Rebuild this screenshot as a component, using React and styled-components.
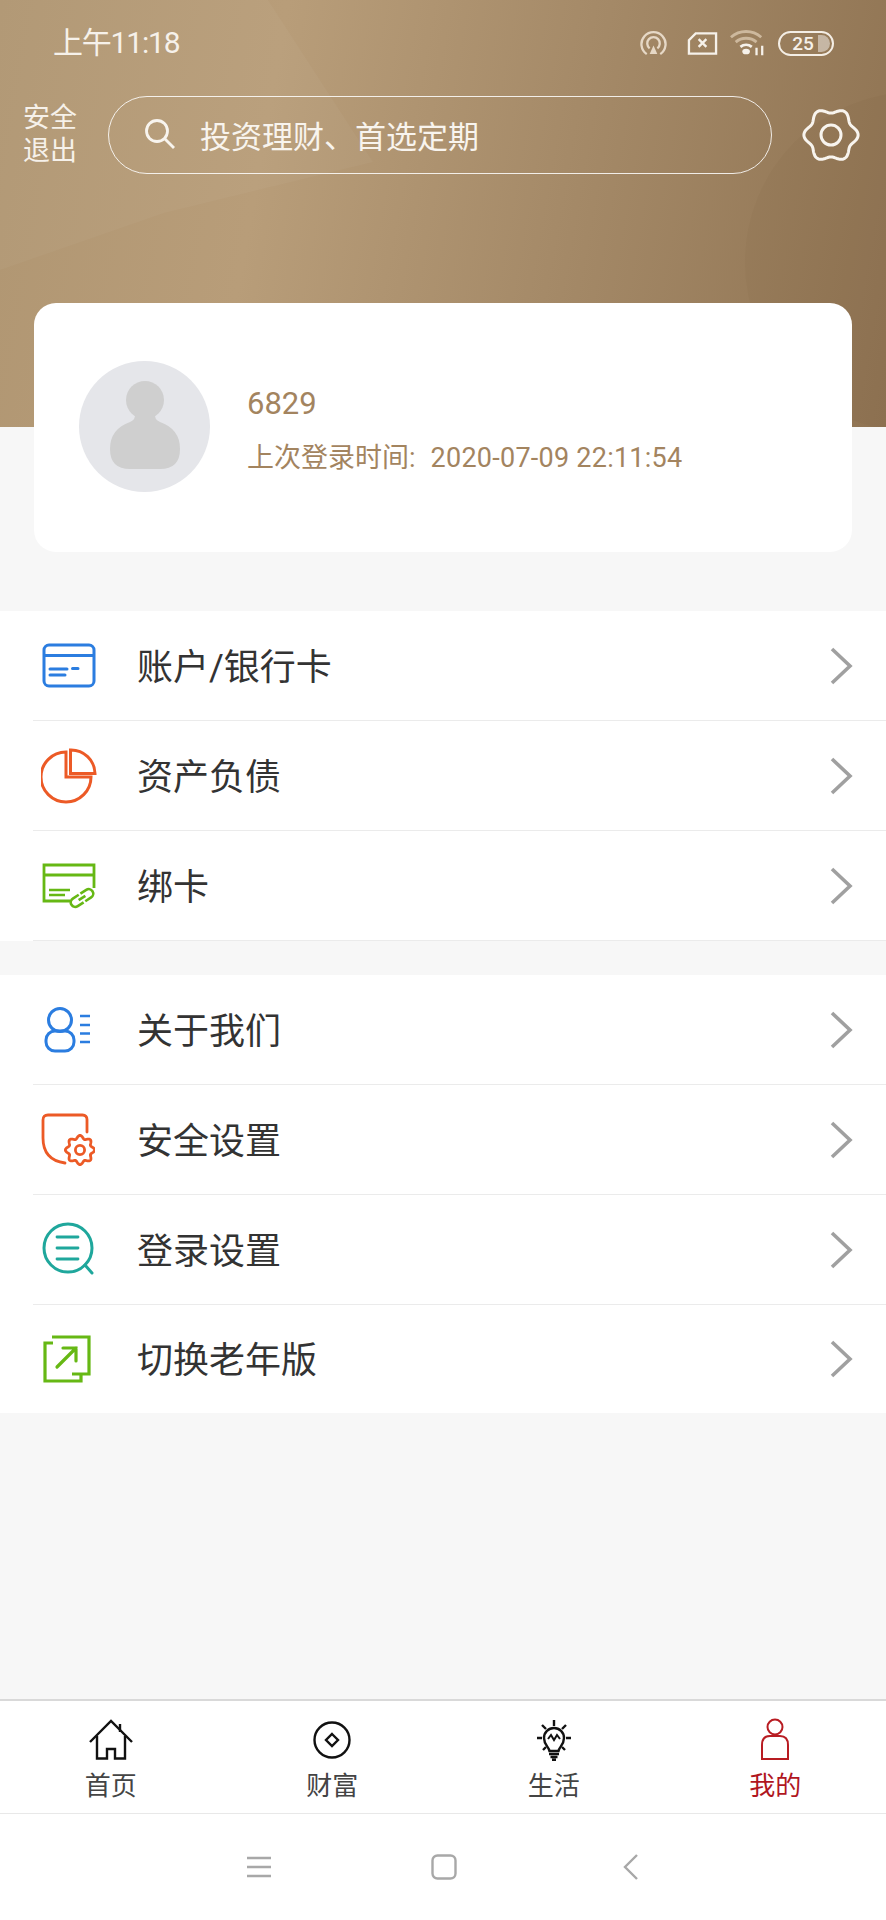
import React from "react";
import styled, { createGlobalStyle } from "styled-components";

const GlobalStyle = createGlobalStyle`
  html, body {
    margin: 0;
    padding: 0;
    height: 1920px;
    overflow: hidden;
    background: #f7f7f7;
  }
  * {
    box-sizing: border-box;
  }
`;

const FONT = `Roboto, "Noto Sans CJK SC", sans-serif`;

// wavy gear outline, used by the settings icons
const gearPath = (cx, cy, r, amp, lobes) => {
  const pts = [];
  for (let i = 0; i < 180; i++) {
    const t = (i / 180) * Math.PI * 2;
    const rr = r + amp * Math.cos(lobes * t);
    pts.push(`${(cx + rr * Math.cos(t)).toFixed(2)} ${(cy + rr * Math.sin(t)).toFixed(2)}`);
  }
  return `M${pts.join("L")}Z`;
};

function CardIcon() {
  return (
    <svg width="54" height="46" viewBox="0 0 54 46" fill="none" stroke="#2b7de0" strokeWidth="3">
      <rect x="2" y="2" width="50" height="41" rx="5" />
      <path d="M2 12.5H52" />
      <path d="M8 26H25M30.5 25.5H36M8 32H23" strokeWidth="3" strokeLinecap="round" />
    </svg>
  );
}

function PieIcon() {
  return (
    <svg width="56" height="56" viewBox="0 0 56 56" fill="none" stroke="#ec5a26" strokeWidth="3">
      <path d="M25 4A25 25 0 1 0 50 29H25Z" />
      <path d="M29.5 2A24 24 0 0 1 54 25.5H29.5Z" />
    </svg>
  );
}

function BindIcon() {
  return (
    <svg width="54" height="46" viewBox="0 0 54 46" fill="none" stroke="#66b814" strokeWidth="2.8">
      <path d="M28 38H2V2H52V25" />
      <path d="M2 12H52" />
      <path d="M7 27H28M7 32H23" strokeWidth="2.6" />
      <g strokeWidth="2.6" transform="translate(40 35) rotate(-33)">
        <path d="M-1 -4.5H-8A4.5 4.5 0 0 0 -8 4.5H-1" />
        <path d="M1 -4.5H8A4.5 4.5 0 0 1 8 4.5H1" />
        <path d="M-4 0H4" />
      </g>
    </svg>
  );
}

function AboutIcon() {
  return (
    <svg width="48" height="48" viewBox="0 0 48 48" fill="none" stroke="#2b7de0" strokeWidth="3">
      <circle cx="16" cy="14" r="11.5" />
      <rect x="2" y="25" width="28" height="20" rx="9" />
      <path d="M36 10H46M36 19H46M36 27.5H46M36 36H46" strokeWidth="2.6" />
    </svg>
  );
}

function SafeIcon() {
  return (
    <svg width="54" height="54" viewBox="0 0 54 54" fill="none" stroke="#ec5a26" strokeWidth="2.8" strokeLinecap="round">
      <path d="M46 19V6.5Q46 2 41.5 2H7Q2 2 2 7V25Q2 47 24 50" />
      <path d={gearPath(39, 37, 13, 1.6, 8)} />
      <circle cx="39" cy="37" r="4.6" />
    </svg>
  );
}

function LoginIcon() {
  return (
    <svg width="54" height="56" viewBox="0 0 54 56" fill="none" stroke="#1fa79c" strokeWidth="3" strokeLinecap="round">
      <circle cx="26" cy="26" r="24" />
      <path d="M15 15H36M15 26H36M15 37H36" strokeWidth="2.8" />
      <path d="M43 43L50 51" />
    </svg>
  );
}

function SwitchIcon() {
  return (
    <svg width="48" height="48" viewBox="0 0 48 48" fill="none" stroke="#66b814" strokeWidth="3.2">
      <path d="M9 2H46V39H29" />
      <path d="M10 8H2V46H38V40" />
      <path d="M14 32L33 13M20 13H33V26" strokeLinecap="round" />
    </svg>
  );
}

function Chevron() {
  return (
    <svg width="24" height="40" viewBox="0 0 24 40" fill="none" stroke="#a0a0a0" strokeWidth="3.6">
      <path d="M3 3L21 20L3 37" />
    </svg>
  );
}

function HomeIcon() {
  return (
    <svg width="46" height="42" viewBox="0 0 46 42" fill="none" stroke="#111" strokeWidth="2.4">
      <path d="M2 23L23 2L44 23" />
      <path d="M9 17V39.5H19V30H27V39.5H37V17" />
      <path d="M32 5V13" />
    </svg>
  );
}

function CoinIcon() {
  return (
    <svg width="40" height="40" viewBox="0 0 40 40" fill="none" stroke="#111" strokeWidth="2.4">
      <circle cx="20" cy="20" r="17.5" />
      <path d="M20 14L26 20L20 26L14 20Z" />
    </svg>
  );
}

function BulbIcon() {
  return (
    <svg width="40" height="44" viewBox="0 0 40 44" fill="none" stroke="#111" strokeWidth="2.4">
      <path d="M15.5 33C15 29 10 27 10 20A10 10 0 0 1 30 20C30 27 25 29 24.5 33Z" />
      <path d="M20 2V8M8 7L12 11M32 7L28 11M3 20H8M32 20H37M9 32L12 29M31 32L28 29" />
      <path d="M14 21L17 17L20 22L23 17L26 21" strokeWidth="2" />
      <path d="M15 36H25M16.5 39H23.5M18 41.8H22" />
    </svg>
  );
}

function UserIcon() {
  return (
    <svg width="32" height="44" viewBox="0 0 32 44" fill="none" stroke="#b81c22" strokeWidth="2">
      <circle cx="16" cy="9" r="7.5" />
      <path d="M3 41V27Q3 18 11 18H21Q29 18 29 27V41Z" />
    </svg>
  );
}

const MENU_ONE = [
  { label: "账户/银行卡", icon: <CardIcon />, x: 9 },
  { label: "资产负债", icon: <PieIcon />, x: 8 },
  { label: "绑卡", icon: <BindIcon />, x: 9 },
];

const MENU_TWO = [
  { label: "关于我们", icon: <AboutIcon />, x: 11 },
  { label: "安全设置", icon: <SafeIcon />, x: 8 },
  { label: "登录设置", icon: <LoginIcon />, x: 9 },
  { label: "切换老年版", icon: <SwitchIcon />, x: 10, last: true },
];

const TABS = [
  { label: "首页", icon: <HomeIcon /> },
  { label: "财富", icon: <CoinIcon /> },
  { label: "生活", icon: <BulbIcon /> },
  { label: "我的", icon: <UserIcon />, active: true },
];

const Page = styled.div`
  width: 886px;
  height: 1920px;
  display: flex;
  flex-direction: column;
  background: #f7f7f7;
  font-family: ${FONT};
  overflow: hidden;
`;

const Header = styled.header`
  position: relative;
  height: 427px;
  flex: none;
  overflow: hidden;
  color: #fff;
  background: linear-gradient(100deg, #b09672 0%, #b89d79 30%, #a58a68 62%, #8f7352 100%);
`;

const LightShape = styled.div`
  position: absolute;
  inset: 0;
  background: rgba(255, 255, 255, 0.03);
  clip-path: polygon(0 0, 268px 0, 373px 162px, 164px 213px, 0 270px);
`;

const DarkCircle = styled.div`
  position: absolute;
  left: 745px;
  top: 92px;
  width: 340px;
  height: 340px;
  border-radius: 50%;
  background: rgba(90, 60, 30, 0.035);
`;

const StatusBar = styled.div`
  position: relative;
  height: 86px;
  padding: 0 52px 0 53px;
  display: flex;
  align-items: center;
  justify-content: space-between;
`;

const Clock = styled.span`
  font-size: 30px;
  line-height: 30px;
  letter-spacing: -1.2px;
  color: #f6f1ea;
`;

const StatusIcons = styled.div`
  display: flex;
  align-items: center;
  gap: 12px;
`;

const Battery = styled.div`
  position: relative;
  width: 56px;
  height: 25px;
  border: 2.5px solid #f4eee5;
  border-radius: 13px;
  display: flex;
  align-items: center;
  justify-content: center;
  font-size: 19px;
  font-weight: 500;
  padding-right: 6px;
  color: #f6f1ea;
  &::after {
    content: "";
    position: absolute;
    right: 2px;
    top: 2px;
    bottom: 2px;
    width: 12px;
    border-radius: 0 9px 9px 0;
    background: rgba(255, 255, 255, 0.45);
  }
`;

const SearchRow = styled.div`
  position: relative;
  display: flex;
  align-items: center;
  height: 78px;
  margin-top: 10px;
  padding-left: 23px;
`;

const Logout = styled.div`
  width: 54px;
  font-size: 27px;
  line-height: 33px;
  color: #f6f1ea;
`;

const SearchBox = styled.div`
  width: 664px;
  height: 78px;
  margin-left: 31px;
  padding: 0 0 2px 35px;
  display: flex;
  align-items: center;
  gap: 24px;
  border: 1px solid rgba(255, 255, 255, 0.85);
  border-radius: 39px;
  font-size: 31px;
  color: #f8f4ee;
`;

const SettingsBtn = styled.div`
  margin-left: 29px;
  display: flex;
`;

const Card = styled.section`
  position: relative;
  flex: none;
  margin: -124px 34px 0;
  height: 249px;
  padding: 58px 45px 0;
  display: flex;
  gap: 37px;
  background: #fff;
  border-radius: 22px;
`;

const Avatar = styled.div`
  width: 131px;
  height: 131px;
  flex: none;
  padding-bottom: 4px;
  border-radius: 50%;
  background: #e5e6ea;
  display: flex;
  align-items: center;
  justify-content: center;
`;

const CardInfo = styled.div`
  padding-top: 22px;
  color: #a3845f;
`;

const UserNo = styled.div`
  font-size: 31px;
  line-height: 42px;
`;

const LastLogin = styled.div`
  margin-top: 13px;
  font-size: 27px;
  line-height: 40px;
  white-space: nowrap;
`;

const LoginDate = styled.span`
  margin-left: 15px;
  letter-spacing: 0.25px;
`;

const MenuGroup = styled.ul`
  list-style: none;
  margin: ${(p) => p.$top}px 0 0;
  padding: 0;
  flex: none;
  background: #fff;
`;

const MenuItem = styled.li`
  height: ${(p) => (p.$last ? 108 : 110)}px;
  margin-left: 33px;
  padding-right: 33px;
  display: flex;
  align-items: center;
  border-bottom: ${(p) => (p.$last ? "none" : "1px solid #ebebeb")};
`;

const IconSlot = styled.span`
  width: 104px;
  flex: none;
  padding-left: ${(p) => p.$x}px;
  display: flex;
  align-items: center;
`;

const MenuLabel = styled.span`
  flex: 1;
  font-size: 36px;
  line-height: 48px;
  margin-top: 4px;
  color: #333;
`;

const Spacer = styled.div`
  flex: 1;
`;

const TabBar = styled.nav`
  flex: none;
  height: 115px;
  display: grid;
  grid-template-columns: repeat(4, 1fr);
  background: #fff;
  border-top: 2px solid #d9d9d9;
  border-bottom: 1px solid #e8e8e8;
`;

const Tab = styled.div`
  display: flex;
  flex-direction: column;
  align-items: center;
  padding-top: 16px;
  font-size: 26px;
  line-height: 36px;
  color: ${(p) => (p.$active ? "#b0161e" : "#444")};
`;

const TabIcon = styled.span`
  height: 51px;
  padding-bottom: 5px;
  display: flex;
  align-items: center;
`;

const NavBar = styled.div`
  flex: none;
  height: 106px;
  padding-left: 247px;
  background: #fff;
  display: grid;
  grid-template-columns: 184px 192px 16px;
  align-items: center;
`;

const App = () => (
  <Page>
    <GlobalStyle />
    <Header>
      <LightShape />
      <DarkCircle />
      <StatusBar>
        <Clock>上午11:18</Clock>
        <StatusIcons>
          <svg width="27" height="27" viewBox="0 0 28 28" fill="none" stroke="#e6d8c6" strokeWidth="2.4">
            <path d="M7 25A12.5 12.5 0 1 1 21 25" />
            <path d="M10 19A6.5 6.5 0 1 1 18 19" />
            <path d="M14 16L18 25H10Z" fill="#e6d8c6" stroke="none" />
          </svg>
          <svg width="31" height="25" viewBox="0 0 32 25" fill="none" stroke="#f6f1ea" strokeWidth="2.4" style={{ marginLeft: 8 }}>
            <path d="M9 2H30V23H2V9Z" />
            <path d="M12 8L20 16M20 8L12 16" />
          </svg>
          <svg width="36" height="28" viewBox="0 0 38 28" fill="none">
            <path d="M1 8A24 24 0 0 1 33 8" stroke="#cdb89d" strokeWidth="3" />
            <path d="M6 13A17 17 0 0 1 28 13" stroke="#cdb89d" strokeWidth="3" />
            <path d="M11 18A10 10 0 0 1 23 18" stroke="#f6f1ea" strokeWidth="3" />
            <ellipse cx="17" cy="23" rx="4" ry="3" fill="#f6f1ea" />
            <path d="M28 19V27M34 17V27" stroke="#f6f1ea" strokeWidth="2.4" />
          </svg>
          <Battery>25</Battery>
        </StatusIcons>
      </StatusBar>
      <SearchRow>
        <Logout>安全退出</Logout>
        <SearchBox>
          <svg width="32" height="32" viewBox="0 0 32 32" fill="none" stroke="#f8f4ee" strokeWidth="2.8">
            <circle cx="13" cy="13" r="10.5" />
            <path d="M21 21L30 30" />
          </svg>
          投资理财、首选定期
        </SearchBox>
        <SettingsBtn>
          <svg width="60" height="56" viewBox="0 0 60 56" fill="none" stroke="#f8f4ee" strokeWidth="3">
            <path d={gearPath(30, 28, 24.5, 2.6, 6)} />
            <circle cx="30" cy="28" r="10" />
          </svg>
        </SettingsBtn>
      </SearchRow>
    </Header>

    <Card>
      <Avatar>
        <svg width="70" height="88" viewBox="0 0 70 88" fill="#cfcfcf">
          <circle cx="35" cy="19" r="19" />
          <path d="M25 33Q26 38 20 41Q0 48 0 68Q0 88 20 88H50Q70 88 70 68Q70 48 50 41Q44 38 45 33Z" />
        </svg>
      </Avatar>
      <CardInfo>
        <UserNo>6829</UserNo>
        <LastLogin>
          上次登录时间:<LoginDate>2020-07-09 22:11:54</LoginDate>
        </LastLogin>
      </CardInfo>
    </Card>

    <MenuGroup $top={59}>
      {MENU_ONE.map((item) => (
        <MenuItem key={item.label}>
          <IconSlot $x={item.x}>{item.icon}</IconSlot>
          <MenuLabel>{item.label}</MenuLabel>
          <Chevron />
        </MenuItem>
      ))}
    </MenuGroup>

    <MenuGroup $top={34}>
      {MENU_TWO.map((item) => (
        <MenuItem key={item.label} $last={item.last}>
          <IconSlot $x={item.x}>{item.icon}</IconSlot>
          <MenuLabel>{item.label}</MenuLabel>
          <Chevron />
        </MenuItem>
      ))}
    </MenuGroup>

    <Spacer />

    <TabBar>
      {TABS.map((tab) => (
        <Tab key={tab.label} $active={tab.active}>
          <TabIcon>{tab.icon}</TabIcon>
          {tab.label}
        </Tab>
      ))}
    </TabBar>

    <NavBar>
      <svg width="24" height="22" viewBox="0 0 24 22" fill="none" stroke="#a8a8a8" strokeWidth="2.4">
        <path d="M0 2H24M0 11H24M0 20H24" />
      </svg>
      <svg width="26" height="26" viewBox="0 0 26 26" fill="none" stroke="#a8a8a8" strokeWidth="2.4">
        <rect x="1.5" y="1.5" width="23" height="23" rx="5" />
      </svg>
      <svg width="16" height="26" viewBox="0 0 16 26" fill="none" stroke="#a8a8a8" strokeWidth="2.4">
        <path d="M14 1L2 13L14 25" />
      </svg>
    </NavBar>
  </Page>
);

export default App;
